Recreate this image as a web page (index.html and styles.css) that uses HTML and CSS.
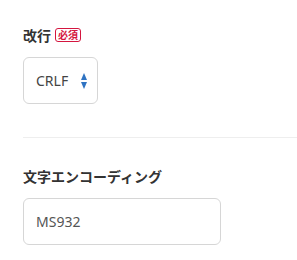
FILE: index.html
```html
<!DOCTYPE html>
<html lang="ja">
<head>
  <meta charset="UTF-8">
  <meta name="viewport" content="width=device-width, initial-scale=1.0">
  <title>出力設定</title>
  <link rel="stylesheet" href="styles.css">
</head>
<body>
  <div class="settings">
    <div class="field">
      <div class="field-label">改行 <span class="required">必須</span></div>
      <div class="select-box">
        <span>CRLF</span>
        <svg class="arrows" width="6" height="16" viewBox="0 0 6 16">
          <path d="M3 0 L6 7 L0 7 Z" fill="#2f73c2"/>
          <path d="M0 9 L6 9 L3 16 Z" fill="#2f73c2"/>
        </svg>
      </div>
    </div>

    <hr class="divider">

    <div class="field">
      <div class="field-label">文字エンコーディング</div>
      <div class="text-box">MS932</div>
    </div>
  </div>
</body>
</html>
```

FILE: styles.css
```css
body {
  margin: 0;
  background: white;
  font-family: "Noto Sans", "Noto Sans CJK JP", sans-serif;
  color: #333;
}

.settings {
  padding: 25px 0 0 23px;
}

.field-label {
  display: flex;
  align-items: center;
  gap: 4px;
  font-size: 14px;
  font-weight: bold;
  height: 20px;
  color: #333;
}

.required {
  display: inline-block;
  font-size: 10px;
  font-weight: bold;
  line-height: 12px;
  color: #d4163f;
  border: 1px solid #d4163f;
  border-radius: 3px;
  padding: 0 2px;
}

.select-box,
.text-box {
  box-sizing: border-box;
  height: 47px;
  margin-top: 12px;
  border: 1px solid #d6d6d6;
  border-radius: 6px;
  font-size: 14px;
  color: #444;
  display: flex;
  align-items: center;
  padding-left: 12px;
}

.select-box {
  width: 75px;
  gap: 13px;
}

.text-box {
  width: 198px;
  color: #555;
}

.divider {
  border: none;
  border-top: 1px solid #eee;
  margin: 33px 0 0 0;
}

.settings .field:last-child {
  margin-top: 28px;
}
```
